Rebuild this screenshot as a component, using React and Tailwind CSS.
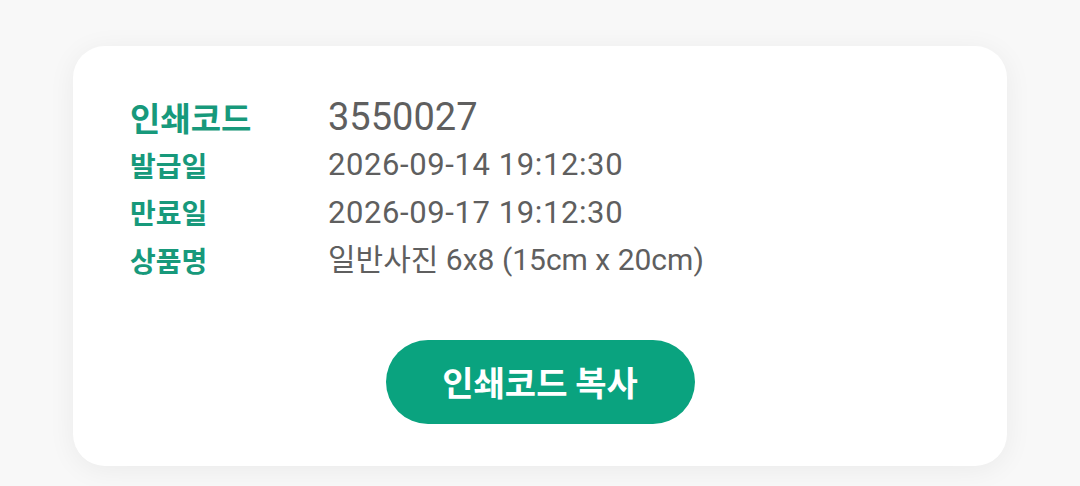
import React from "react";

const rows = [
  { label: "발급일", value: "2026-09-14 19:12:30", cls: "text-[31px] tracking-[0.6px]" },
  { label: "만료일", value: "2026-09-17 19:12:30", cls: "text-[31px] tracking-[0.6px]" },
  { label: "상품명", value: "일반사진 6x8 (15cm x 20cm)", cls: "text-[30px] tracking-[0px]" },
];

export default function App() {
  return (
    <div
      className="w-[1080px] h-[486px] bg-[#f8f8f8] pt-[46px] pl-[73px]"
      style={{ fontFamily: '"Roboto", "Noto Sans CJK KR", sans-serif' }}
    >
      <div className="w-[934px] h-[420px] bg-white rounded-[32px] shadow-[0_4px_28px_rgba(0,0,0,0.06)] pt-[47px] pl-[57px] pr-[57px] flex flex-col">
        <div className="flex items-center h-[48px]">
          <div className="w-[198px] text-[33px] font-bold text-[#17997b] leading-none" style={{ fontFamily: '"Noto Sans CJK KR", sans-serif' }}>인쇄코드</div>
          <div className="text-[38px] text-[#5f5f5f] leading-none">3550027</div>
        </div>
        {rows.map((r) => (
          <div key={r.label} className="flex items-center h-[47.5px]">
            <div className="w-[198px] text-[28px] font-bold text-[#17997b] leading-none" style={{ fontFamily: '"Noto Sans CJK KR", sans-serif' }}>{r.label}</div>
            <div className={`${r.cls} text-[#5f5f5f] leading-none`}>{r.value}</div>
          </div>
        ))}
        <div className="flex justify-center mt-[56px]">
          <button className="w-[309px] h-[84px] rounded-full bg-[#0aa37f] text-white text-[34px] font-bold flex items-center justify-center" style={{ fontFamily: '"Noto Sans CJK KR", sans-serif' }}>
            인쇄코드 복사
          </button>
        </div>
      </div>
    </div>
  );
}
